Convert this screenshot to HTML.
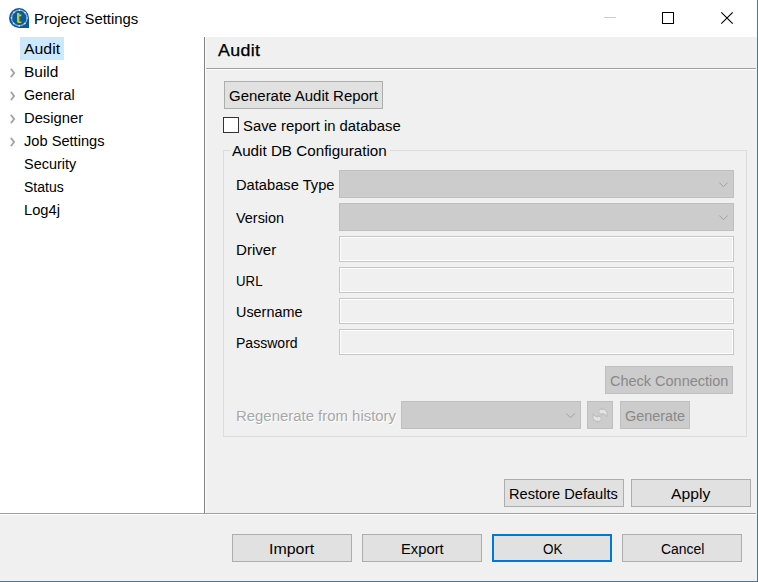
<!DOCTYPE html>
<html>
<head>
<meta charset="utf-8">
<title>Project Settings</title>
<style>
html,body{margin:0;padding:0;}
body{width:758px;height:582px;overflow:hidden;background:#f0f0f0;position:relative;font-family:"Liberation Sans",sans-serif;font-size:15.5px;color:#000;}
.abs{position:absolute;}
.t{position:absolute;white-space:nowrap;line-height:20px;height:20px;}
#titlebar{left:0;top:0;width:757px;height:37px;background:#fff;}
#rborder{left:757px;top:0;width:1px;height:582px;background:#1883d7;}
#bborder{left:0;top:581px;width:758px;height:1px;background:#1883d7;}
#rwhite{display:none;}
#tree{left:0;top:37px;width:204px;height:476px;background:#fff;}
#vline{left:204px;top:37px;width:1px;height:476px;background:#828282;}
#vlinew{left:205px;top:37px;width:1px;height:476px;background:#fcfcfc;}
#sel{left:20px;top:37px;width:44px;height:23px;background:#cce8ff;}
#hline1{left:206px;top:68px;width:550px;height:1px;background:#a0a0a0;}
#hline1w{left:206px;top:69px;width:550px;height:1px;background:#fff;}
#hline2{left:0;top:513px;width:756px;height:1px;background:#a0a0a0;}
#hline2w{left:0;top:514px;width:756px;height:1px;background:#fff;}
.btn{position:absolute;box-sizing:border-box;height:28px;background:#e1e1e1;border:1px solid #adadad;}
.btn.dis{background:#cccccc;border-color:#bfbfbf;}
.btn.def{border:2px solid #0078d7;}
.combo{position:absolute;box-sizing:border-box;height:28px;background:#cccccc;border:1px solid #bfbfbf;}
.field{position:absolute;box-sizing:border-box;height:26px;left:339px;width:395px;background:#f0f0f0;border:1px solid #c6c6c6;box-shadow:inset 0 0 0 1px #fff;}
#group{left:223px;top:150px;width:524px;height:287px;box-sizing:border-box;border:1px solid #dcdcdc;}
#grouplabel{left:230px;top:140px;height:20px;width:160px;background:#f0f0f0;}
.dtext{color:#a8a8a8;text-shadow:1px 1px 0 #fff;}
#cb{left:223px;top:117px;width:16px;height:16px;box-sizing:border-box;border:1px solid #333;background:#fff;}
svg{position:absolute;overflow:visible;}
</style>
</head>
<body>
<div class="abs" id="titlebar"></div>
<div class="abs" id="tree"></div>
<div class="abs" id="vline"></div><div class="abs" id="vlinew"></div>
<div class="abs" id="sel"></div>
<div class="abs" id="hline1"></div><div class="abs" id="hline1w"></div>
<div class="abs" id="hline2"></div><div class="abs" id="hline2w"></div>

<svg id="appicon" style="left:9px;top:8px" width="20" height="20" viewBox="0 0 20 20">
  <path d="M10 0 A10 10 0 0 1 20 10 L20 20 L10 20 A10 10 0 0 1 10 0 Z" fill="#0b5a9c"/>
  <circle cx="10.3" cy="10" r="7.8" fill="none" stroke="#86aed3" stroke-width="1.2"/>
  <circle cx="10.3" cy="10" r="7.8" fill="none" stroke="#e4eef7" stroke-width="1.5" stroke-dasharray="1.4 4.726" stroke-dashoffset="0.7"/>
  <path d="M8 5 H10.4 V6.6 H12.4 V8.2 H10.4 V13.4 H12.4 V15 H9.4 Q8 15 8 13.6 Z" fill="#c2cd14"/>
</svg>
<svg style="left:604px;top:17px" width="12" height="1"><rect width="12" height="1" fill="#cccccc"/></svg>
<svg style="left:662px;top:12px" width="12" height="12"><rect x="0.5" y="0.5" width="11" height="11" fill="none" stroke="#000" stroke-width="1"/></svg>
<svg style="left:721px;top:12px" width="12" height="12"><path d="M0.3 0.3 L11.7 11.7 M11.7 0.3 L0.3 11.7" stroke="#000" stroke-width="1.1" fill="none"/></svg>

<svg style="left:9px;top:67px" width="7" height="12"><path d="M1.9 1.9 L5.1 6 L1.9 10.1" fill="none" stroke="#a3a3a3" stroke-width="1.8"/></svg>
<svg style="left:9px;top:90px" width="7" height="12"><path d="M1.9 1.9 L5.1 6 L1.9 10.1" fill="none" stroke="#a3a3a3" stroke-width="1.8"/></svg>
<svg style="left:9px;top:113px" width="7" height="12"><path d="M1.9 1.9 L5.1 6 L1.9 10.1" fill="none" stroke="#a3a3a3" stroke-width="1.8"/></svg>
<svg style="left:9px;top:136px" width="7" height="12"><path d="M1.9 1.9 L5.1 6 L1.9 10.1" fill="none" stroke="#a3a3a3" stroke-width="1.8"/></svg>

<div class="btn" id="b_gar" style="left:224px;top:81px;width:159px;"></div>
<div class="abs" id="cb"></div>

<div class="abs" id="group"></div>
<div class="abs" id="grouplabel"></div>

<div class="combo" style="left:339px;top:170px;width:395px;"></div>
<svg style="left:719px;top:182px" width="10" height="6"><path d="M0.3 0.5 L4.5 4.8 L8.7 0.5" fill="none" stroke="#a0a0a0" stroke-width="1"/></svg>
<div class="combo" style="left:339px;top:203px;width:395px;"></div>
<svg style="left:719px;top:215px" width="10" height="6"><path d="M0.3 0.5 L4.5 4.8 L8.7 0.5" fill="none" stroke="#a0a0a0" stroke-width="1"/></svg>

<div class="field" style="top:236px;"></div>
<div class="field" style="top:267px;"></div>
<div class="field" style="top:298px;"></div>
<div class="field" style="top:329px;"></div>

<div class="btn dis" id="b_cc" style="left:605px;top:366px;width:128px;"></div>

<div class="combo" style="left:401px;top:401px;width:180px;"></div>
<svg style="left:566px;top:413px" width="10" height="6"><path d="M0.3 0.5 L4.5 4.8 L8.7 0.5" fill="none" stroke="#a0a0a0" stroke-width="1"/></svg>
<div class="btn dis" style="left:587px;top:401px;width:26px;"></div>
<svg id="refresh" style="left:587px;top:401px" width="26" height="28" viewBox="0 0 26 28">
  <g fill="#e5e5e5" stroke="#b4b4b4" stroke-width="0.75" stroke-linejoin="round">
    <path id="arw" d="M11.4 10.6 L14.8 6.9 L14.8 8.4 L16.8 8.4 Q20 8.7 20 12 L19.8 15.9 Q18.6 12.7 16.2 12.6 L14.8 12.6 L14.8 14.4 Z"/>
    <path d="M11.4 10.6 L14.8 6.9 L14.8 8.4 L16.8 8.4 Q20 8.7 20 12 L19.8 15.9 Q18.6 12.7 16.2 12.6 L14.8 12.6 L14.8 14.4 Z" transform="rotate(180 13 14.25)"/>
  </g>
</svg>
<div class="btn dis" id="b_gen" style="left:620px;top:401px;width:70px;"></div>

<div class="btn" id="b_rd" style="left:504px;top:479px;width:120px;"></div>
<div class="btn" id="b_ap" style="left:631px;top:479px;width:120px;"></div>

<div class="btn" id="b_im" style="left:232px;top:534px;width:120px;"></div>
<div class="btn" id="b_ex" style="left:362px;top:534px;width:120px;"></div>
<div class="btn def" id="b_ok" style="left:492px;top:534px;width:120px;"></div>
<div class="btn" id="b_ca" style="left:622px;top:534px;width:120px;"></div>

<div class="t" id="wtitle" style="left:33.72px;top:9.00px;letter-spacing:0.000px;transform:scaleX(0.9601);transform-origin:0 0;">Project Settings</div>
<div class="t" id="ti0" style="left:24.06px;top:39.00px;letter-spacing:0.000px;transform:scaleX(1.0208);transform-origin:0 0;">Audit</div>
<div class="t" id="ti1" style="left:23.56px;top:62.00px;letter-spacing:0.000px;transform:scaleX(0.9987);transform-origin:0 0;">Build</div>
<div class="t" id="ti2" style="left:23.58px;top:85.00px;letter-spacing:0.000px;transform:scaleX(0.9168);transform-origin:0 0;">General</div>
<div class="t" id="ti3" style="left:24.22px;top:108.00px;letter-spacing:0.000px;transform:scaleX(0.9523);transform-origin:0 0;">Designer</div>
<div class="t" id="ti4" style="left:24.13px;top:131.00px;letter-spacing:0.000px;transform:scaleX(0.9438);transform-origin:0 0;">Job Settings</div>
<div class="t" id="ti5" style="left:23.91px;top:154.00px;letter-spacing:0.000px;transform:scaleX(0.9319);transform-origin:0 0;">Security</div>
<div class="t" id="ti6" style="left:23.93px;top:177.00px;letter-spacing:0.000px;transform:scaleX(0.9044);transform-origin:0 0;">Status</div>
<div class="t" id="ti7" style="left:24.22px;top:200.00px;letter-spacing:0.000px;transform:scaleX(0.9468);transform-origin:0 0;">Log4j</div>
<div class="t" id="heading" style="left:217.60px;top:39.50px;letter-spacing:0.300px;font-size:16.5px;-webkit-text-stroke:0.25px #000;transform:scaleX(1.08);transform-origin:0 0;">Audit</div>
<div class="t" id="gar" style="left:228.95px;top:86.00px;letter-spacing:0.000px;transform:scaleX(0.9661);transform-origin:0 0;">Generate Audit Report</div>
<div class="t" id="save" style="left:242.85px;top:116.00px;letter-spacing:0.000px;transform:scaleX(0.9583);transform-origin:0 0;">Save report in database</div>
<div class="t" id="grp" style="left:232.06px;top:141.00px;letter-spacing:0.000px;transform:scaleX(0.9812);transform-origin:0 0;">Audit DB Configuration</div>
<div class="t" id="dbtype" style="left:235.72px;top:175.00px;letter-spacing:0.000px;transform:scaleX(0.9472);transform-origin:0 0;">Database Type</div>
<div class="t" id="version" style="left:236.49px;top:208.00px;letter-spacing:0.000px;transform:scaleX(0.9306);transform-origin:0 0;">Version</div>
<div class="t" id="driver" style="left:235.64px;top:240.00px;letter-spacing:0.000px;transform:scaleX(0.9732);transform-origin:0 0;">Driver</div>
<div class="t" id="url" style="left:235.94px;top:271.00px;letter-spacing:0.000px;transform:scaleX(0.8549);transform-origin:0 0;">URL</div>
<div class="t" id="user" style="left:235.92px;top:302.00px;letter-spacing:0.000px;transform:scaleX(0.9284);transform-origin:0 0;">Username</div>
<div class="t" id="pass" style="left:235.91px;top:333.00px;letter-spacing:0.000px;transform:scaleX(0.9054);transform-origin:0 0;">Password</div>
<div class="t" id="cc" style="left:610.24px;top:371.00px;letter-spacing:0.000px;color:#898989;transform:scaleX(0.9345);transform-origin:0 0;">Check Connection</div>
<div class="t dtext" id="regen" style="left:235.88px;top:406.00px;letter-spacing:0.000px;transform:scaleX(0.9624);transform-origin:0 0;">Regenerate from history</div>
<div class="t" id="gen" style="left:624.74px;top:406.00px;letter-spacing:0.000px;color:#898989;transform:scaleX(0.9284);transform-origin:0 0;">Generate</div>
<div class="t" id="rd" style="left:508.72px;top:484.00px;letter-spacing:0.000px;transform:scaleX(0.9431);transform-origin:0 0;">Restore Defaults</div>
<div class="t" id="apply" style="left:670.56px;top:484.00px;letter-spacing:0.000px;transform:scaleX(1.0120);transform-origin:0 0;">Apply</div>
<div class="t" id="import" style="left:268.73px;top:539.00px;letter-spacing:0.000px;transform:scaleX(1.0278);transform-origin:0 0;">Import</div>
<div class="t" id="export" style="left:400.72px;top:539.00px;letter-spacing:0.000px;transform:scaleX(0.9529);transform-origin:0 0;">Export</div>
<div class="t" id="ok" style="left:542.83px;top:539.00px;letter-spacing:0.000px;transform:scaleX(0.8686);transform-origin:0 0;">OK</div>
<div class="t" id="cancel" style="left:660.62px;top:539.00px;letter-spacing:0.000px;transform:scaleX(0.8994);transform-origin:0 0;">Cancel</div>

<div class="abs" id="rwhite"></div>
<div class="abs" id="rborder"></div>
<div class="abs" id="bborder"></div>
</body>
</html>
